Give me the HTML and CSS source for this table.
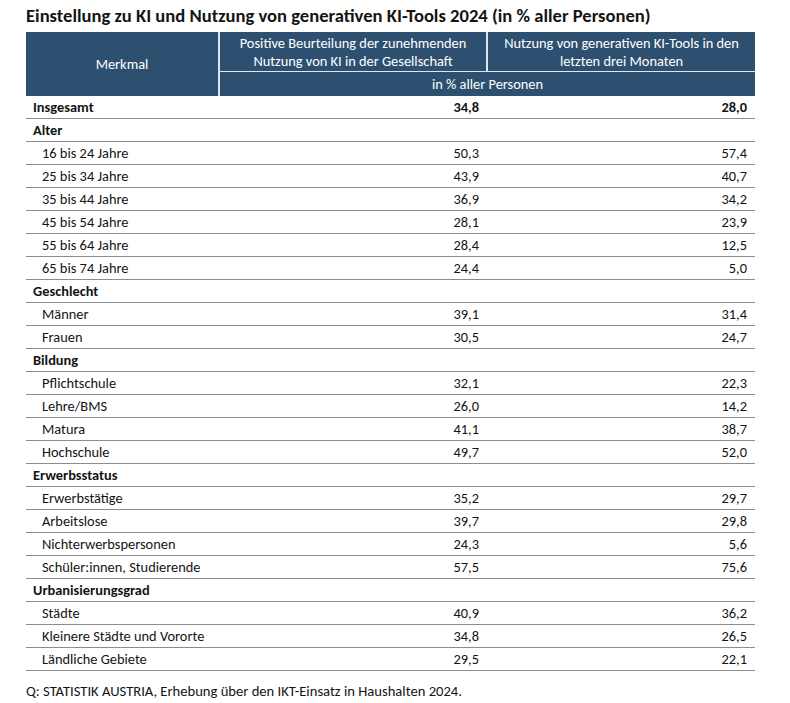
FILE: index.html
```html
<!DOCTYPE html>
<html lang="de">
<head>
<meta charset="utf-8">
<title>Einstellung zu KI</title>
<link rel="stylesheet" href="styles.css">
</head>
<body>
<h1 class="title">Einstellung zu KI und Nutzung von generativen KI-Tools 2024 (in % aller Personen)</h1>
<table class="tbl">
  <colgroup><col class="c1"><col class="c2"><col class="c3"></colgroup>
  <thead>
    <tr>
      <th rowspan="2" class="h-merk">Merkmal</th>
      <th class="h-top">Positive Beurteilung der zunehmenden<br>Nutzung von KI in der Gesellschaft</th>
      <th class="h-top h-last">Nutzung von generativen KI-Tools in den<br>letzten drei Monaten</th>
    </tr>
    <tr>
      <th colspan="2" class="h-unit">in % aller Personen</th>
    </tr>
  </thead>
  <tbody>
    <tr class="b"><td>Insgesamt</td><td class="n">34,8</td><td class="n">28,0</td></tr>
    <tr class="b"><td>Alter</td><td></td><td></td></tr>
    <tr><td class="in">16 bis 24 Jahre</td><td class="n">50,3</td><td class="n">57,4</td></tr>
    <tr><td class="in">25 bis 34 Jahre</td><td class="n">43,9</td><td class="n">40,7</td></tr>
    <tr><td class="in">35 bis 44 Jahre</td><td class="n">36,9</td><td class="n">34,2</td></tr>
    <tr><td class="in">45 bis 54 Jahre</td><td class="n">28,1</td><td class="n">23,9</td></tr>
    <tr><td class="in">55 bis 64 Jahre</td><td class="n">28,4</td><td class="n">12,5</td></tr>
    <tr><td class="in">65 bis 74 Jahre</td><td class="n">24,4</td><td class="n">5,0</td></tr>
    <tr class="b"><td>Geschlecht</td><td></td><td></td></tr>
    <tr><td class="in">Männer</td><td class="n">39,1</td><td class="n">31,4</td></tr>
    <tr><td class="in">Frauen</td><td class="n">30,5</td><td class="n">24,7</td></tr>
    <tr class="b"><td>Bildung</td><td></td><td></td></tr>
    <tr><td class="in">Pflichtschule</td><td class="n">32,1</td><td class="n">22,3</td></tr>
    <tr><td class="in">Lehre/BMS</td><td class="n">26,0</td><td class="n">14,2</td></tr>
    <tr><td class="in">Matura</td><td class="n">41,1</td><td class="n">38,7</td></tr>
    <tr><td class="in">Hochschule</td><td class="n">49,7</td><td class="n">52,0</td></tr>
    <tr class="b"><td>Erwerbsstatus</td><td></td><td></td></tr>
    <tr><td class="in">Erwerbstätige</td><td class="n">35,2</td><td class="n">29,7</td></tr>
    <tr><td class="in">Arbeitslose</td><td class="n">39,7</td><td class="n">29,8</td></tr>
    <tr><td class="in">Nichterwerbspersonen</td><td class="n">24,3</td><td class="n">5,6</td></tr>
    <tr><td class="in">Schüler:innen, Studierende</td><td class="n">57,5</td><td class="n">75,6</td></tr>
    <tr class="b"><td>Urbanisierungsgrad</td><td></td><td></td></tr>
    <tr><td class="in">Städte</td><td class="n">40,9</td><td class="n">36,2</td></tr>
    <tr><td class="in">Kleinere Städte und Vororte</td><td class="n">34,8</td><td class="n">26,5</td></tr>
    <tr><td class="in">Ländliche Gebiete</td><td class="n">29,5</td><td class="n">22,1</td></tr>
  </tbody>
</table>
<p class="source">Q: STATISTIK AUSTRIA, Erhebung über den IKT-Einsatz in Haushalten 2024.</p>
</body>
</html>
```
FILE: styles.css
```css
html, body {
  margin: 0;
  padding: 0;
  background: #fff;
}
body {
  font-family: Carlito, "Open Sans", Lato, sans-serif;
  color: #141414;
  padding: 5px 0 0 26px;
  width: 729px;
}
.title {
  margin: 0;
  font-size: 18.6px;
  font-weight: bold;
  line-height: 22px;
  height: 27px;
  white-space: nowrap;
}
.tbl {
  width: 729px;
  border-collapse: collapse;
  table-layout: fixed;
  font-size: 14.4px;
}
.c1 { width: 193px; }
.c2 { width: 268px; }
.c3 { width: 268px; }
thead th {
  background: #2e5070;
  color: #fff;
  font-weight: normal;
  text-align: center;
  padding: 0;
  line-height: 18px;
}
.h-merk {
  border-right: 2px solid #dfe6ee;
  height: 64px;
}
.h-top {
  height: 39px;
  border-bottom: 1px solid #dfe6ee;
}
.h-top.h-last { border-left: 2px solid #dfe6ee; }
.h-unit { height: 24px; }
tbody td {
  height: 22px;
  padding: 0 8px 0 7px;
  border-bottom: 1px solid #8c8c8c;
  white-space: nowrap;
  line-height: 22px;
}
tbody tr.b td { font-weight: bold; }
td.in { padding-left: 16px; }
td.n { text-align: right; }
.source {
  margin: 11px 0 0 0;
  font-size: 14.6px;
}
```
